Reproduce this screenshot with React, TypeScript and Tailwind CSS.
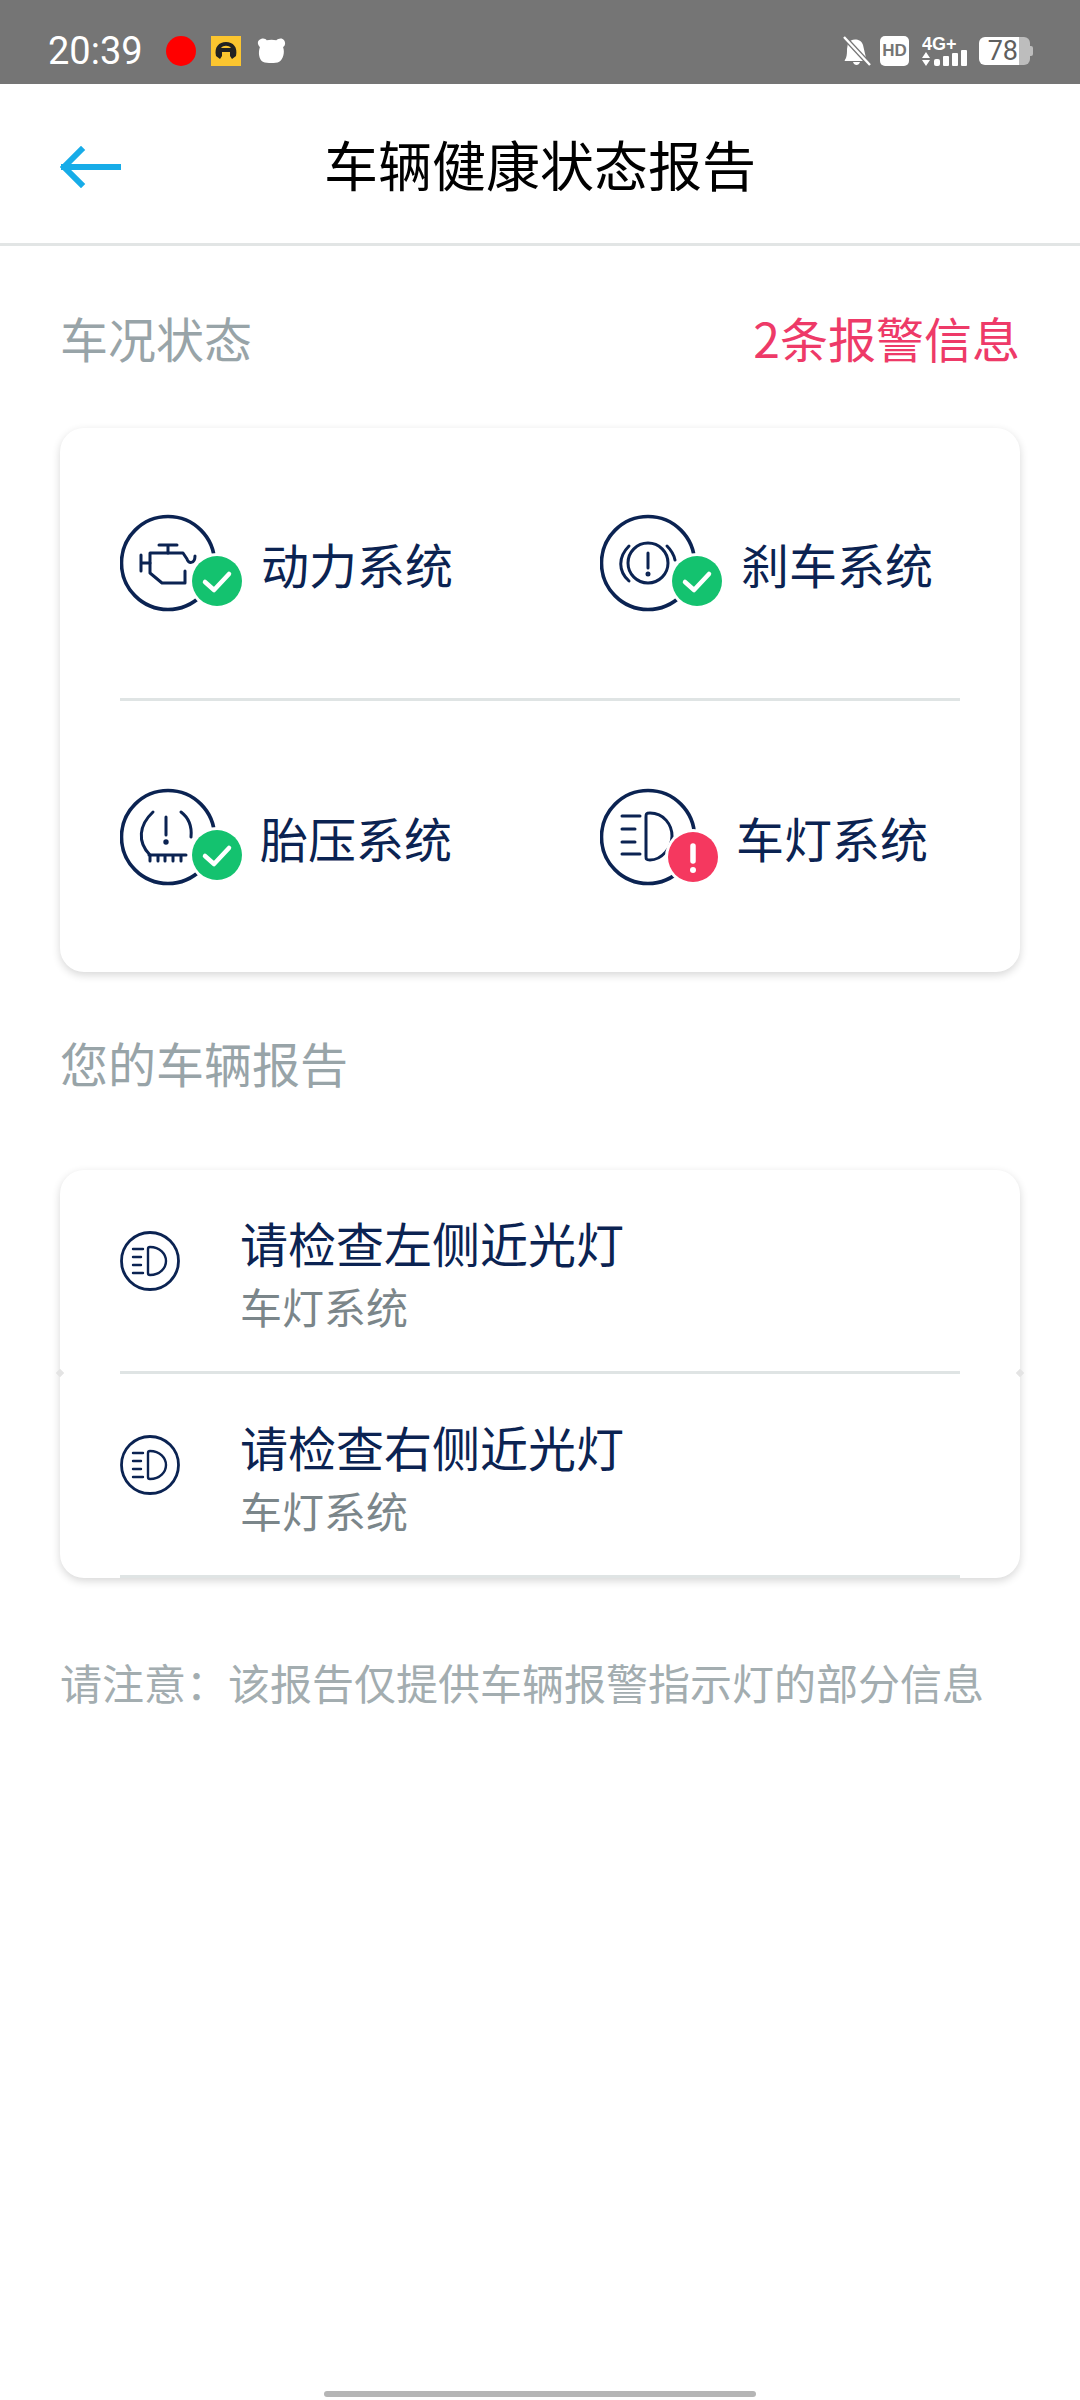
import { ReactNode } from "react";

const cjk = { fontFamily: '"Noto Sans CJK SC", "Noto Sans", sans-serif' };

// full-width colon, the footnote needs it
const NOTE = "请注意\uFF1A该报告仅提供车辆报警指示灯的部分信息";

function EngineGlyph() {
  return (
    <g fill="none" stroke="#0b2352" strokeWidth="3" strokeLinejoin="round" strokeLinecap="round">
      <path d="M39 30h18M48 30v8M21 40v16M21 48h9" />
      <path d="M30 38h33l4 6c1 5 8 5 8-3M30 38v20l12 10h23V56" />
    </g>
  );
}

function BrakeGlyph() {
  return (
    <g fill="none" stroke="#0b2352" strokeWidth="3" strokeLinecap="round">
      <circle cx="48" cy="48" r="20" />
      <path d="M48 38v15" />
      <circle cx="48" cy="59" r="1" fill="#0b2352" />
      <path d="M29 31C18 42 18 56 29 66" />
      <path d="M67 31c5 5 7 9 8 14" />
    </g>
  );
}

function TireGlyph() {
  return (
    <g fill="none" stroke="#0b2352" strokeWidth="3" strokeLinecap="round">
      <path d="M33 23C19 36 17 53 30 66M61 23c8 6 11 15 10 25" />
      <path d="M46 28v18" />
      <circle cx="46" cy="53" r="1.2" fill="#0b2352" />
      <path d="M29 66h37M30 66v6M38 66v6M45 66v6M53 66v6M61 66v6" />
    </g>
  );
}

function LampGlyph() {
  return (
    <g fill="none" stroke="#0b2352" strokeWidth="3" strokeLinecap="round" strokeLinejoin="round">
      <path d="M22 27h18M22 40h13M22 53h13M22 65h18" />
      <path d="M50 24C64 24 72 36 72 47C72 58 62 71 50 71C46 71 46 70 46 67V28C46 25 46 24 50 24z" />
    </g>
  );
}

function SystemIcon({ glyph, alert }: { glyph: ReactNode; alert?: boolean }) {
  return (
    <svg viewBox="0 -13 122 122" className="w-[122px] h-[122px] shrink-0">
      <circle cx="48" cy="48" r="46.5" fill="none" stroke="#0b2352" strokeWidth="3.6" />
      {glyph}
      <circle cx={alert ? 93 : 97} cy={alert ? 68 : 66} r="28" fill="#fff" />
      {alert ? (
        <>
          <circle cx="93" cy="68" r="25" fill="#f5385f" />
          <path d="M93 57v15" stroke="#fff" strokeWidth="5.5" strokeLinecap="round" />
          <circle cx="93" cy="81" r="3" fill="#fff" />
        </>
      ) : (
        <>
          <circle cx="97" cy="66" r="25" fill="#14c26f" />
          <path d="M85 67l9 8 15-16" fill="none" stroke="#fff" strokeWidth="4.5" strokeLinecap="round" strokeLinejoin="round" />
        </>
      )}
    </svg>
  );
}

function SmallLamp() {
  return (
    <svg viewBox="0 0 60 60" className="w-[60px] h-[60px] shrink-0 mb-[20px]">
      <circle cx="30" cy="30" r="28.5" fill="none" stroke="#0b2352" strokeWidth="2.8" />
      <g fill="none" stroke="#0b2352" strokeWidth="2.4" strokeLinecap="round" strokeLinejoin="round">
        <path d="M13 18h10M13 26h8M13 34h8M13 42h10" />
        <path d="M30 16c10 0 16 7 16 14s-6 14-16 14c-2 0-2-1-2-2V18c0-1 0-2 2-2z" />
      </g>
    </svg>
  );
}

function SystemCell({ glyph, label, alert, gap }: { glyph: ReactNode; label: string; alert?: boolean; gap: string }) {
  return (
    <div className={`flex items-center ${gap}`}>
      <SystemIcon glyph={glyph} alert={alert} />
      <span className="text-[48px] leading-[60px] text-[#0b2352]">{label}</span>
    </div>
  );
}

function ReportRow({ title }: { title: string }) {
  return (
    <div className="h-[204px] flex items-center mx-[60px] border-b-[3px] border-[#dfe4e4]">
      <SmallLamp />
      <div className="ml-[60px] pt-[4px] flex flex-col">
        <span className="text-[48px] leading-[60px] text-[#0b2352]">{title}</span>
        <span className="text-[42px] leading-[56px] mt-[6px] text-[#7b868a]">车灯系统</span>
      </div>
    </div>
  );
}

function StatusBar() {
  return (
    <div className="h-[84px] bg-[#757575] flex items-center pt-[18px] pl-[48px] pr-[47px] text-white">
      <span className="text-[38px] leading-none font-['Roboto'] w-[118px]">20:39</span>
      <span className="w-[30px] h-[30px] rounded-full bg-[#ff0000]" />
      <svg viewBox="0 0 30 30" className="w-[30px] h-[30px] ml-[15px]">
        <rect width="30" height="30" fill="#fbc52f" />
        <path d="M5 20c-2-9 3-14 10-14s12 5 10 14l-4 3-2-3v-4h-8v4l-2 3zM10 12h10c-2-3-8-3-10 0z" fill="#222" />
      </svg>
      <svg viewBox="0 0 30 28" className="w-[29px] h-[28px] ml-[16px]">
        <path d="M2 3c3-3 7-2 8 0 3-1 7-1 10 0 2-2 6-3 8 0s1 6-1 7c2 5 0 13-4 15-4 2-12 2-17 0C2 23 1 15 3 10 1 8 0 5 2 3z" fill="#fff" />
      </svg>
      <div className="ml-auto flex items-center">
        <svg viewBox="0 0 28 30" className="w-[28px] h-[30px]">
          <path d="M5 7c3-5 13-5 15 2l3 13c1 2 1 3 0 3H2c-1 0 0-1 1-3 1-3 1-6 1-9zM10 26h7c-1 4-6 4-7 0z" fill="#fff" />
          <path d="M1 1l26 28" stroke="#757575" strokeWidth="5" />
          <path d="M1 1l26 28" stroke="#fff" strokeWidth="2.4" />
        </svg>
        <span className="ml-[9px] w-[29px] h-[30px] rounded-[5px] bg-white text-[#757575] text-[17px] font-bold leading-[30px] text-center font-['Liberation_Sans']">HD</span>
        <svg viewBox="0 0 46 36" className="w-[46px] h-[36px] ml-[13px]">
          <text x="0" y="17" fontSize="18" fontWeight="700" fill="#fff" fontFamily="Liberation Sans">4G+</text>
          <path d="M4 19l4 6H0zM4 33l4-6H0z" fill="#fff" />
          <rect x="12" y="26" width="6" height="7" rx="2" fill="#fff" />
          <rect x="21" y="23" width="6" height="10" rx="1" fill="#fff" />
          <rect x="30" y="20" width="6" height="13" rx="1" fill="#fff" />
          <rect x="39" y="17" width="6" height="16" rx="1" fill="#fff" />
        </svg>
        <div className="ml-[11px] w-[54px] h-[28px] flex items-center">
          <div className="w-[40px] h-[28px] bg-white rounded-l-[6px] text-[#5f5f5f] text-[27px] leading-[28px] font-['Roboto'] text-right pr-[1px]">78</div>
          <div className="w-[11px] h-[28px] bg-[#bdbdbd] rounded-r-[6px]" />
          <div className="w-[3px] h-[10px] bg-[#bdbdbd] rounded-r-[2px]" />
        </div>
      </div>
    </div>
  );
}

export default function App() {
  return (
    <div className="relative w-[1080px] h-[2400px] bg-white overflow-hidden" style={cjk}>
      <StatusBar />

      <header className="h-[162px] relative flex items-center justify-center border-b-[3px] border-[#e2e5e5]">
        <svg viewBox="0 0 62 42" className="absolute left-[59px] top-[62px] w-[62px] h-[42px]">
          <path d="M59 21H5M22 4L5 21l17 17" fill="none" stroke="#17ace8" strokeWidth="6" strokeLinecap="square" />
        </svg>
        <h1 className="text-[54px] leading-[70px] text-black font-normal">车辆健康状态报告</h1>
      </header>

      <main className="px-[60px]">
        <div className="flex items-center justify-between h-[60px] mt-[61px]">
          <span className="text-[48px] text-[#98a4a8]">车况状态</span>
          <span className="text-[48px] text-[#ee3a68]">2条报警信息</span>
        </div>

        <section className="mt-[61px] h-[544px] bg-white rounded-[24px] shadow-[0_3px_8px_rgba(0,0,0,0.16)] px-[60px] flex flex-col">
          <div className="h-[273px] grid grid-cols-[480px_1fr] items-center border-b-[3px] border-[#dfe4e4]">
            <SystemCell glyph={<EngineGlyph />} label="动力系统" gap="gap-[19px]" />
            <SystemCell glyph={<BrakeGlyph />} label="刹车系统" gap="gap-[19px]" />
          </div>
          <div className="flex-1 grid grid-cols-[480px_1fr] items-center">
            <SystemCell glyph={<TireGlyph />} label="胎压系统" gap="gap-[18px]" />
            <SystemCell glyph={<LampGlyph />} label="车灯系统" alert gap="gap-[14px]" />
          </div>
        </section>

        <div className="h-[60px] flex items-center mt-[60px] text-[48px] text-[#98a4a8]">您的车辆报告</div>

        <section className="relative mt-[78px] bg-white rounded-[24px] shadow-[0_3px_8px_rgba(0,0,0,0.16)]">
          <ReportRow title="请检查左侧近光灯" />
          <ReportRow title="请检查右侧近光灯" />
          <span className="absolute left-[-3px] top-[200px] w-[6px] h-[6px] rotate-45 bg-[#e4e4e4]" />
          <span className="absolute right-[-3px] top-[200px] w-[6px] h-[6px] rotate-45 bg-[#e4e4e4]" />
        </section>

        <p className="mt-[76px] h-[56px] leading-[56px] text-[42px] whitespace-nowrap text-[#a3adb0]">{NOTE}</p>
      </main>

      <div className="absolute bottom-[3px] left-[324px] w-[432px] h-[6px] rounded-full bg-[#b5b5b5]" />
    </div>
  );
}
